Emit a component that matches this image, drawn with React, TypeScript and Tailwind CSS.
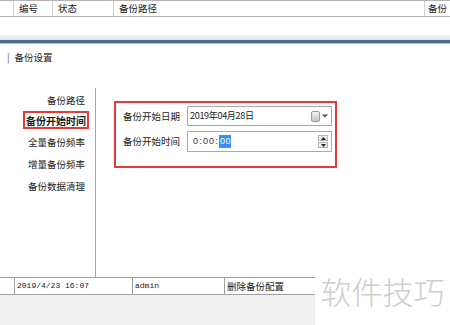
import React from "react";

const cjk = { fontFamily: '"Noto Sans CJK SC", "Noto Sans", sans-serif' };

export default function App() {
  return (
    <div
      className="relative flex h-[325px] w-[450px] flex-col overflow-hidden bg-white text-[#1a1a1a]"
      style={cjk}
    >
      {/* table header */}
      <div className="flex h-[17px] shrink-0 border-b border-t border-[#b4b4b4] text-[9.5px] leading-[15px]">
        <div className="w-[14px] border-r border-[#d0d0d0]" />
        <div className="w-[39px] border-r border-[#d0d0d0] pl-[5px]">编号</div>
        <div className="w-[61px] border-r border-[#d0d0d0] pl-[5px]">状态</div>
        <div className="w-[311px] border-r border-[#d0d0d0] pl-[5px]">备份路径</div>
        <div className="flex-1 pl-[3px]">备份</div>
      </div>
      <div className="h-[18px] shrink-0 bg-white" />
      <div className="h-[5px] shrink-0 bg-gradient-to-b from-[#f6f6f6] to-[#e2e2e2]" />
      <div className="h-[3px] shrink-0 bg-[#4b6a95]" />
      <div className="h-px shrink-0 bg-[#b3c3d8]" />

      {/* content */}
      <div className="flex h-[233px] shrink-0 flex-col">
        <div className="flex h-[44px] items-start pl-[7px] pt-[7px] text-[9.5px] leading-[12px]">
          <span className="mr-[5px] text-[#555]">|</span>
          <span>备份设置</span>
        </div>
        <div className="flex flex-1">
          {/* menu */}
          <div className="flex w-[96px] flex-col items-end border-r border-[#a8a8a8] pt-[2px] text-[9.5px]">
            <div className="flex h-[20px] items-center pr-[10px]">备份路径</div>
            <div className="mr-[6px] mt-[1px] flex h-[18px] items-center border-2 border-[#e23b3b] px-[1px] text-[10px] font-bold">
              备份开始时间
            </div>
            <div className="mt-[2px] flex h-[22px] items-center pr-[10px]">全量备份频率</div>
            <div className="flex h-[22px] items-center pr-[10px]">增量备份频率</div>
            <div className="flex h-[22px] items-center pr-[10px]">备份数据清理</div>
          </div>
          {/* panel */}
          <div className="flex-1 pl-[18px] pt-[13px]">
            <div className="flex h-[67px] w-[223px] flex-col border-2 border-[#e23b3b] pl-[7px] pr-[3px] pt-[3px] text-[9.5px]">
              <div className="flex h-[20px] items-center">
                <div className="w-[64px]">备份开始日期</div>
                <div className="flex h-[20px] flex-1 items-center border border-[#a9a9a9] pl-[2px] pr-[3px]">
                  <span className="flex-1 text-[9px] tracking-[-0.3px]">2019年04月28日</span>
                  <span className="h-[11px] w-[9px] rounded-[2px] border border-[#9a9a9a] bg-gradient-to-b from-[#f2f2f2] to-[#c4c4c4]" />
                  <svg width="6" height="4" viewBox="0 0 6 4" className="ml-[2px]">
                    <path d="M0 0.5 L6 0.5 L3 3.5 Z" fill="#3c4f6a" />
                  </svg>
                </div>
              </div>
              <div className="mt-[5px] flex h-[21px] items-center">
                <div className="w-[64px]">备份开始时间</div>
                <div className="flex h-[21px] flex-1 items-center border border-[#7eb4ea] pl-[5px] pr-[3px]">
                  <span
                    className="flex flex-1 items-center text-[9px] tracking-[1.2px] text-[#333]"
                    style={{ fontFamily: '"Liberation Sans", sans-serif' }}
                  >
                    0:00:
                    <span className="bg-[#3390ff] pl-px tracking-[0.5px] text-white">00</span>
                  </span>
                  <div className="flex flex-col gap-px">
                    <div className="flex h-[6px] w-[10px] items-center justify-center border border-[#b5b5b5] bg-[#f0f0f0]">
                      <svg width="5" height="3" viewBox="0 0 5 3">
                        <path d="M0 3 L5 3 L2.5 0 Z" fill="#222" />
                      </svg>
                    </div>
                    <div className="flex h-[6px] w-[10px] items-center justify-center border border-[#b5b5b5] bg-[#f0f0f0]">
                      <svg width="5" height="3" viewBox="0 0 5 3">
                        <path d="M0 0 L5 0 L2.5 3 Z" fill="#222" />
                      </svg>
                    </div>
                  </div>
                </div>
              </div>
            </div>
          </div>
        </div>
      </div>

      {/* bottom row */}
      <div className="flex h-[18px] w-[315px] shrink-0 border-t border-b border-[#a0a0a0] text-[9px] leading-[16px]">
        <div className="w-[15px] border-r border-[#a0a0a0]" />
        <div
          className="w-[118px] border-r border-[#a0a0a0] pl-[2px] text-[8px]"
          style={{ fontFamily: '"Liberation Mono", monospace' }}
        >
          2019/4/23 16:07
        </div>
        <div
          className="w-[92px] border-r border-[#a0a0a0] pl-[2px] text-[8px]"
          style={{ fontFamily: '"Liberation Mono", monospace' }}
        >
          admin
        </div>
        <div className="flex-1 pl-[2px] text-[9.5px]">删除备份配置</div>
      </div>
      <div className="w-[315px] flex-1 bg-[#f0f0f0]" />

      {/* watermark */}
      <div className="absolute left-[315px] top-[272px] flex h-[53px] w-[135px] items-start justify-center bg-white pt-[1px] text-[31px] font-light leading-[36px] text-[#cdcdcd]">
        软件技巧
      </div>
    </div>
  );
}
